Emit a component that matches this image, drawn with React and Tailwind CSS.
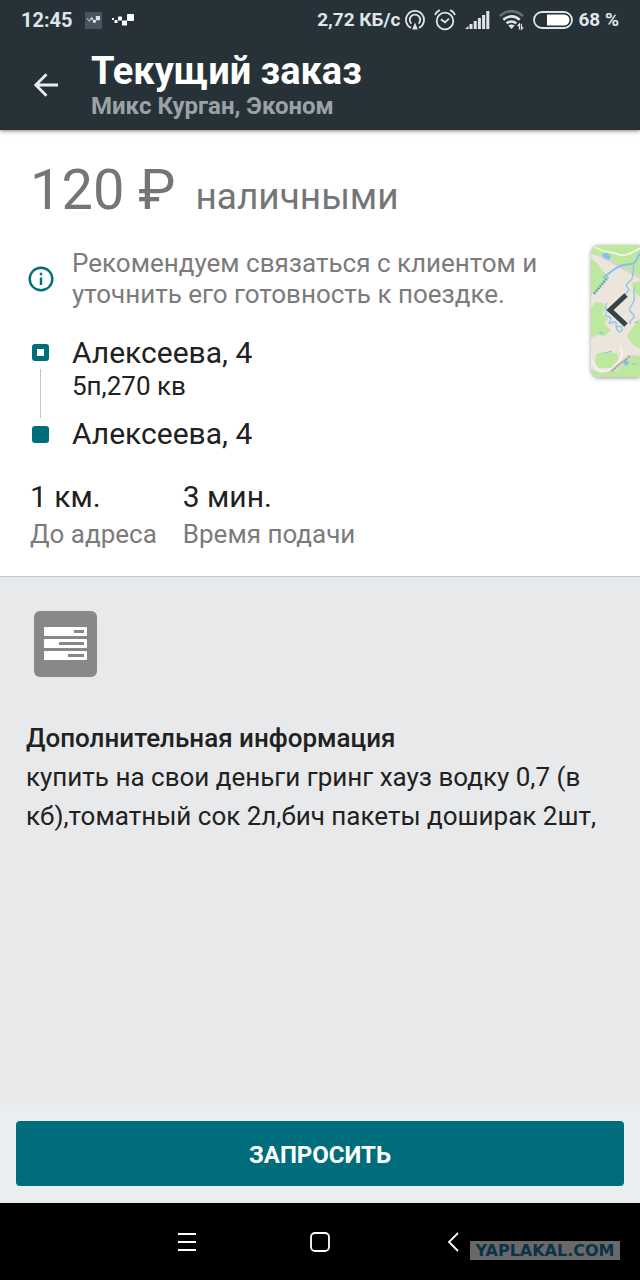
const stats = [
  { value: "1 км.", label: "До адреса" },
  { value: "3 мин.", label: "Время подачи" },
];

function CheckersIcon({ className }) {
  return (
    <svg viewBox="0 0 22 12" className={className} fill="currentColor" aria-hidden="true">
      <rect x="0" y="4" width="2" height="2" />
      <rect x="2.5" y="6" width="3" height="3" rx="0.5" />
      <rect x="6" y="2.5" width="4" height="4" rx="0.5" />
      <rect x="10" y="6.5" width="5" height="5" rx="0.5" />
      <rect x="15" y="0" width="7" height="7" rx="0.7" />
    </svg>
  );
}

function HotspotIcon() {
  return (
    <svg viewBox="0 0 20 20" className="size-5" fill="none" stroke="currentColor" strokeWidth="1.8" aria-hidden="true">
      <path d="M6 18A9 9 0 1 1 14 18" />
      <path d="M6.4 13.6A5.2 5.2 0 1 1 13.6 13.6" />
      <path d="M10 12.5 12.8 19.5H7.2Z" fill="currentColor" stroke="none" />
    </svg>
  );
}

function AlarmIcon() {
  return (
    <svg viewBox="0 0 22 22" className="size-[22px]" fill="none" stroke="currentColor" strokeWidth="1.8" strokeLinecap="round" aria-hidden="true">
      <circle cx="11" cy="12" r="8.3" />
      <path d="M7.5 10.8 11 13.3 14.5 10.2" />
      <path d="M1.3 5.3C2.2 3.5 3.6 2.2 5.3 1.4M20.7 5.3C19.8 3.5 18.4 2.2 16.7 1.4" />
    </svg>
  );
}

function SignalIcon() {
  return (
    <svg viewBox="0 0 25 18" className="h-[18px] w-[25px]" fill="currentColor" aria-hidden="true">
      <path d="M0 18 3.5 15V18Z" />
      <rect x="4.5" y="13" width="3" height="5" />
      <rect x="8.7" y="10" width="3" height="8" />
      <rect x="12.9" y="7" width="3" height="11" />
      <rect x="17.1" y="4" width="3" height="14" />
      <rect x="21.3" y="0" width="3" height="18" />
    </svg>
  );
}

function WifiIcon() {
  return (
    <svg viewBox="0 0 25 20" className="h-5 w-[25px]" fill="none" stroke="currentColor" strokeWidth="2.6" aria-hidden="true">
      <path d="M1 6.2C7.5 -0.4 17.5 -0.4 24 6.2" opacity="0.35" />
      <path d="M4.3 9.8C9 5.2 16 5.2 20.7 9.8" />
      <path d="M7.6 13.4C10.4 10.8 14.6 10.8 17.4 13.4" />
      <path d="M9.3 15.6C11.2 14 13.8 14 15.7 15.6L12.5 19Z" fill="currentColor" stroke="none" />
      <path d="M20.4 19.5V14L18.6 16M22.4 13.8V19.3L24.2 17.2" strokeWidth="1.2" />
    </svg>
  );
}

function BatteryIcon() {
  return (
    <svg viewBox="0 0 40 18" className="h-[18px] w-10" aria-hidden="true">
      <rect x="1" y="1" width="38" height="16" rx="8" fill="none" stroke="currentColor" strokeWidth="1.8" />
      <path d="M14 3.5H31A5.5 5.5 0 0 1 31 14.5H14Z" fill="#fff" />
    </svg>
  );
}

function StatusBar() {
  return (
    <div className="flex h-10 items-center justify-between px-[21px] text-[20px] leading-6 font-bold text-[#dfe5e8]">
      <div className="flex items-center">
        <span>12:45</span>
        <span className="ml-3 flex size-[17px] items-center justify-center bg-[#47565e]">
          <CheckersIcon className="w-[13px]" />
        </span>
        <CheckersIcon className="ml-[10px] w-[22px] text-white" />
      </div>
      <div className="flex items-center text-[19px]">
        <span>2,72 КБ/с</span>
        <span className="ml-[5px] flex items-center gap-[9px]">
          <HotspotIcon />
          <AlarmIcon />
          <SignalIcon />
          <WifiIcon />
          <BatteryIcon />
        </span>
        <span className="ml-[5px]">68 %</span>
      </div>
    </div>
  );
}

function Header() {
  return (
    <header className="relative z-10 bg-[#273238] shadow-[0_1px_4px_rgba(0,0,0,0.5)]">
      <StatusBar />
      <div className="flex h-[90px] items-center">
        <button type="button" aria-label="Назад" className="ml-[33px] text-[#e8edef]">
          <svg viewBox="0 0 26 26" className="size-[26px]" fill="none" stroke="currentColor" strokeWidth="2.8" aria-hidden="true">
            <path d="M25 13H3M13.5 2.2 2.8 13 13.5 23.8" />
          </svg>
        </button>
        <div className="ml-8 pt-[2px]">
          <h1 className="text-[38px] leading-10 font-bold text-white">Текущий заказ</h1>
          <p className="text-[24px] leading-[30px] font-bold text-[#9aa2a6]">Микс Курган, Эконом</p>
        </div>
      </div>
    </header>
  );
}

function MapTab() {
  return (
    <button
      type="button"
      aria-label="Показать карту"
      className="absolute top-[115px] right-0 h-[132px] w-[49px] overflow-hidden rounded-l-lg bg-[#ebe5dc] shadow-[0_1px_4px_rgba(0,0,0,0.4)]"
    >
      <svg viewBox="0 0 49 132" className="h-full w-full" fill="none" aria-hidden="true">
        <g fill="#bce89f">
          <path d="M0 0H49V34L36 27 24 20 8 11 0 9Z" />
          <path d="M0 13 7 19 12 26 16 30 13 38 7 45 0 50Z" />
          <path d="M0 62 5 57 12 58 15 63 11 69 17 74 13 79 20 85 14 91 6 90 0 93Z" />
          <path d="M49 74 42 82 36 91 41 99 49 104Z" />
          <path d="M5 109 12 107 26 108 28 115 20 123 8 123 4 118Z" />
          <path d="M0 124 10 128 24 126 34 118 40 110 49 111V132H0Z" />
          <path d="M40 38 49 36V52L44 48Z" />
        </g>
        <g stroke="#faf6ef" strokeWidth="1.5">
          <path d="M4 2C12 8 20 6 26 9S38 10 49 3" />
          <path d="M0 114C4 120 4 126 12 126S22 122 28 116 29 106 30 101" />
        </g>
        <path d="M8 10 24 18 49 32" stroke="#dbd2ce" strokeWidth="3" />
        <path d="M14 132 24 122 38 111 49 114" stroke="#d6d0c6" strokeWidth="2" />
        <g fill="#7fc0f4">
          <path d="M11 9 16 8 20 11 18 15 13 13Z" />
          <path d="M32 118 35 114 38 118 35 121Z" />
        </g>
        <path d="M12 33C17 29 20 26 27 22S38 21 43 18 45 11 49 9" stroke="#7fc0f4" strokeWidth="2" />
        <g stroke="#86c2f1" strokeWidth="1.2">
          <path d="M43 20 41 34 35 40 38 45 33 51" />
          <path d="M16 58C12 63 18 65 15 69S23 70 19 76 26 73 25 79 32 78 31 84 26 86 25 82" />
          <path d="M44 42C40 48 46 52 42 58S37 65 42 69 35 76 40 79" />
          <path d="M8 87 11 88V90M14 108 21 106M41 119H46M44 78 47 76" />
        </g>
        <path d="M3 49 17 32" stroke="#6d9cbb" strokeWidth="2.5" strokeDasharray="2 1" />
        <path d="M21 126 39 111" stroke="#a2a39a" strokeWidth="2" strokeDasharray="2 1" />
        <path d="M35 50 19 65 35 80" stroke="#34434c" strokeWidth="5" />
      </svg>
    </button>
  );
}

function OrderSummary() {
  return (
    <section className="relative border-b border-[#c3c6c9] bg-white px-[30px] pt-7 pb-[26px]">
      <p className="flex items-baseline gap-5 text-[#757575]">
        <span className="text-[56px] leading-[64px]">120 ₽</span>
        <span className="text-[37px] leading-10">наличными</span>
      </p>

      <div className="mt-[26px] flex items-center">
        <svg viewBox="0 0 26 26" className="-ml-[2px] size-[26px] shrink-0" fill="none" stroke="#006d7d" strokeWidth="2.4" aria-hidden="true">
          <circle cx="13" cy="13" r="11.3" />
          <path d="M13 11.5V19M13 6.8V9.3" />
        </svg>
        <p className="ml-[18px] max-w-[480px] text-[26px] leading-[31px] text-[#7b7b7b]">
          Рекомендуем связаться с клиентом и уточнить его готовность к поездке.
        </p>
      </div>

      <div className="mt-[25px] flex text-[#212121]">
        <div className="ml-[2px] flex w-[17px] shrink-0 flex-col items-center py-[9px]">
          <span className="size-[17px] rounded-[3px] border-5 border-[#006d7d]" />
          <span className="my-2 w-px flex-1 bg-[#c4c4c4]" />
          <span className="size-[17px] rounded-[3px] bg-[#006d7d]" />
        </div>
        <div className="ml-[23px] text-[30px] leading-9">
          <p>Алексеева, 4</p>
          <p className="mb-[14px] text-[26px] leading-[31px]">5п,270 кв</p>
          <p>Алексеева, 4</p>
        </div>
      </div>

      <dl className="mt-[27px] flex gap-[26px]">
        {stats.map((stat) => (
          <div key={stat.label} className="flex flex-col-reverse gap-1">
            <dt className="text-[26px] leading-[31px] text-[#7b7b7b]">{stat.label}</dt>
            <dd className="text-[30px] leading-9 text-[#212121]">{stat.value}</dd>
          </div>
        ))}
      </dl>

      <MapTab />
    </section>
  );
}

function OrderDetails() {
  return (
    <section className="flex-1 bg-[#e8e9eb] px-[26px] pt-[34px] text-[26px] leading-[39px] text-[#212121]">
      <svg viewBox="0 0 63 66" className="ml-2 h-[66px] w-[63px]" aria-hidden="true">
        <rect width="63" height="66" rx="6" fill="#888" />
        <g fill="#fff">
          <rect x="10" y="16" width="43" height="9" rx="1" />
          <rect x="10" y="28" width="43" height="9" rx="1" />
          <rect x="10" y="40" width="43" height="9" rx="1" />
        </g>
        <g fill="#888">
          <rect x="40" y="19" width="10" height="3" />
          <rect x="25" y="31" width="25" height="3" />
          <rect x="34" y="43" width="16" height="3" />
        </g>
      </svg>
      <h2 className="mt-[42px] font-medium">Дополнительная информация</h2>
      <p>купить на свои деньги гринг хауз водку 0,7 (в кб),томатный сок 2л,бич пакеты доширак 2шт,</p>
    </section>
  );
}

function NavigationBar() {
  return (
    <nav className="relative flex h-[77px] items-center justify-center bg-black text-white">
      <button type="button" aria-label="Меню" className="flex w-[133px] justify-center">
        <svg viewBox="0 0 20 20" className="size-5" stroke="currentColor" strokeWidth="1.8" aria-hidden="true">
          <path d="M1 2H19M1 10H19M1 18H19" />
        </svg>
      </button>
      <button type="button" aria-label="Домой" className="flex w-[133px] justify-center">
        <svg viewBox="0 0 20 20" className="size-5" fill="none" stroke="currentColor" strokeWidth="1.8" aria-hidden="true">
          <rect x="1" y="1" width="18" height="18" rx="4" />
        </svg>
      </button>
      <button type="button" aria-label="Назад" className="flex w-[133px] justify-center">
        <svg viewBox="0 0 12 20" className="h-5 w-3" fill="none" stroke="currentColor" strokeWidth="1.8" aria-hidden="true">
          <path d="M11 1 2 10 11 19" />
        </svg>
      </button>
      <span className="absolute right-5 bottom-5 flex h-[19px] w-[150px] items-center justify-center bg-[#696969] font-['DejaVu_Sans',sans-serif] text-[16px] leading-none font-bold text-[#0b3248]">
        YAPLAKAL.COM
      </span>
    </nav>
  );
}

export default function App() {
  return (
    <div className="flex min-h-screen flex-col font-[Roboto,sans-serif]">
      <Header />
      <main className="flex flex-1 flex-col">
        <OrderSummary />
        <OrderDetails />
      </main>
      <div className="bg-[#eaeef1] px-4 pt-4 pb-[17px]">
        <button type="button" className="h-[65px] w-full rounded-[4px] bg-[#006d7d] pt-[2px] text-[24px] font-bold text-white">
          ЗАПРОСИТЬ
        </button>
      </div>
      <NavigationBar />
    </div>
  );
}
